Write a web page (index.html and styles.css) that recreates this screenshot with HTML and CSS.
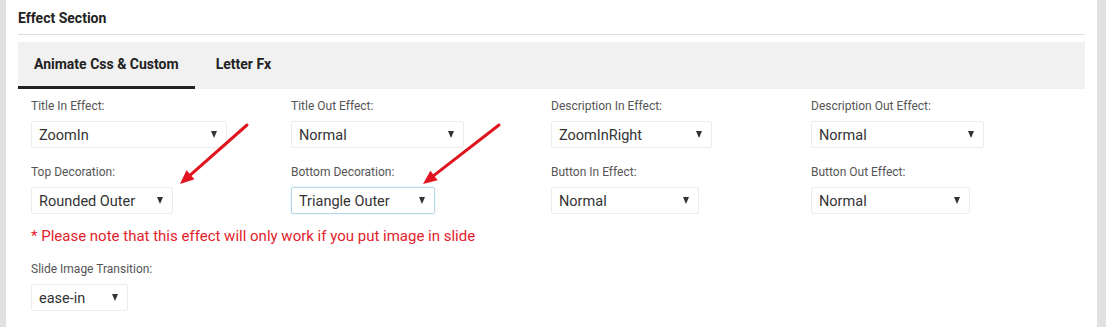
FILE: index.html
```html
<!DOCTYPE html>
<html lang="en">

<head>
    <meta charset="UTF-8">
    <meta name="viewport" content="width=device-width, initial-scale=1.0">
    <title>Effect Section</title>
    <link rel="stylesheet" href="styles.css">
</head>

<body>
    <div class="panel">
        <h3 class="panel-title">Effect Section</h3>
        <div class="tabs">
            <div class="tab active">Animate Css &amp; Custom</div>
            <div class="tab">Letter Fx</div>
        </div>
        <div class="form">
            <div class="grid">
                <div class="field">
                    <label>Title In Effect:</label>
                    <div class="select w195"><span>ZoomIn</span><i class="caret"></i></div>
                </div>
                <div class="field">
                    <label>Title Out Effect:</label>
                    <div class="select w172"><span>Normal</span><i class="caret"></i></div>
                </div>
                <div class="field">
                    <label>Description In Effect:</label>
                    <div class="select w160"><span>ZoomInRight</span><i class="caret"></i></div>
                </div>
                <div class="field">
                    <label>Description Out Effect:</label>
                    <div class="select w172"><span>Normal</span><i class="caret"></i></div>
                </div>
                <div class="field">
                    <label>Top Decoration:</label>
                    <div class="select w142"><span>Rounded Outer</span><i class="caret"></i></div>
                </div>
                <div class="field">
                    <label>Bottom Decoration:</label>
                    <div class="select w143 focus"><span>Triangle Outer</span><i class="caret"></i></div>
                </div>
                <div class="field">
                    <label>Button In Effect:</label>
                    <div class="select w148"><span>Normal</span><i class="caret"></i></div>
                </div>
                <div class="field">
                    <label>Button Out Effect:</label>
                    <div class="select w159"><span>Normal</span><i class="caret"></i></div>
                </div>
            </div>
            <p class="note">* Please note that this effect will only work if you put image in slide</p>
            <div class="field">
                <label>Slide Image Transition:</label>
                <div class="select w97"><span>ease-in</span><i class="caret"></i></div>
            </div>
        </div>
    </div>
    <!-- annotation arrows drawn on top of the screenshot -->
    <svg class="arrows" width="1106" height="327" viewBox="0 0 1106 327">
        <line x1="247" y1="125" x2="190.5" y2="174.8" />
        <polygon points="180,184 194.5,179.3 186.5,170.3" />
        <line x1="499" y1="125" x2="434" y2="175.4" />
        <polygon points="423,184 437.7,180.2 430.4,170.7" />
    </svg>
</body>

</html>
```

FILE: styles.css
```css
:root {
  --text: #333;
  --label: #555;
  --line: #ddd;
  --red: #e3212b;
}
body {
  margin: 0;
  padding: 0;
  background: #e1e1e1;
  font-family: Roboto, "Liberation Sans", sans-serif;
  color: var(--text);
  position: relative;
  height: 327px;
  overflow: hidden;
}
.panel {
  margin-left: 6px;
  width: 1091px;
  height: 327px;
  box-sizing: border-box;
  padding: 0 12px;
  background: #fff;
}
.panel-title {
  margin: 0;
  padding: 8px 0 6px;
  font-size: 14px;
  line-height: 20px;
  font-weight: 700;
  color: #222;
  border-bottom: 1px solid var(--line);
}
.tabs {
  margin-top: 7px;
  display: flex;
  height: 47px;
  background: #f1f1f1;
}
.tab {
  display: flex;
  align-items: center;
  padding: 0 16px 3px;
  font-size: 14px;
  font-weight: 700;
  color: #222;
  box-sizing: border-box;
}
.tab.active {
  border-bottom: 3px solid #222;
  padding-bottom: 0;
}
.tab + .tab {
  padding-left: 21px;
}
.form {
  padding: 9px 13px 0;
}
.grid {
  display: grid;
  grid-template-columns: repeat(4, 260px);
  row-gap: 16px;
}
.field label {
  display: block;
  font-size: 12px;
  line-height: 16px;
  color: var(--label);
  margin-bottom: 7px;
}
.select {
  height: 27px;
  box-sizing: border-box;
  border: 1px solid #ececec;
  border-radius: 2px;
  display: flex;
  align-items: center;
  justify-content: space-between;
  padding: 0 9px 0 7px;
  font-size: 14.5px;
  color: #333;
}
.select span {
  padding-top: 2px;
}
.select.focus {
  border-color: #b9d7e4;
  box-shadow: 0 0 2px rgba(102, 175, 233, 0.35);
}
.caret {
  width: 0;
  height: 0;
  border-left: 3.5px solid transparent;
  border-right: 3.5px solid transparent;
  border-top: 7px solid #333;
}
.w195 { width: 196px; }
.w172 { width: 173px; }
.w160 { width: 161px; }
.w142 { width: 142px; }
.w143 { width: 144px; }
.w148 { width: 148px; }
.w159 { width: 159px; }
.w97 { width: 97px; }
.note {
  margin: 12px 0 15px;
  font-size: 15px;
  line-height: 20px;
  color: var(--red);
}
.arrows {
  position: absolute;
  top: 0;
  left: 0;
  pointer-events: none;
}
.arrows line {
  stroke: #e0141e;
  stroke-width: 3;
  stroke-linecap: round;
}
.arrows polygon {
  fill: #e0141e;
}
```
